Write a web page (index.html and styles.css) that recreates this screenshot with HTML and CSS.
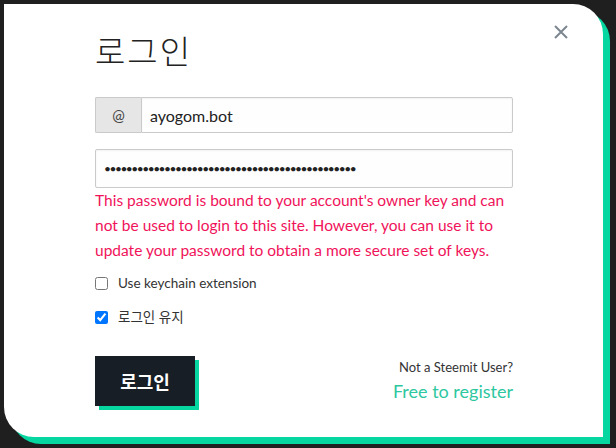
FILE: index.html
```html
<!DOCTYPE html>
<html lang="ko">
<head>
  <meta charset="UTF-8" />
  <title>로그인</title>
  <link rel="stylesheet" href="styles.css">
</head>
<body>
  <div class="modal">
    <button class="close" aria-label="Close">
      <svg width="14" height="14" viewBox="0 0 14 14"><path d="M1 1L13 13M13 1L1 13" stroke="#7d8690" stroke-width="2"/></svg>
    </button>
    <h1 class="title">로그인</h1>

    <form class="login-form">
      <div class="input-group">
        <span class="prefix">@</span>
        <input class="field" type="text" value="ayogom.bot">
      </div>

      <input class="field password" type="password" value="P5Kabcdefghijklmnopqrstuvwxyz12345678901234567">
      <p class="error">This password is bound to your account's owner key and can not be used to login to this site. However, you can use it to update your password to obtain a more secure set of keys.</p>

      <label class="check"><input type="checkbox"> Use keychain extension</label>
      <label class="check"><input type="checkbox" checked> 로그인 유지</label>

      <div class="actions">
        <button type="button" class="btn">로그인</button>
        <div class="signup">
          <div class="signup-note">Not a Steemit User?</div>
          <a class="signup-link" href="#">Free to register</a>
        </div>
      </div>
    </form>
  </div>
</body>
</html>
```

FILE: styles.css
```css
body {
  margin: 0;
  background: #1f1f1f;
  font-family: 'Source Sans Pro', 'Lato', 'Noto Sans CJK KR', sans-serif;
  color: #333;
  height: 448px;
  overflow: hidden;
}

.modal {
  position: relative;
  margin: 4px 0 0 4px;
  width: 599px;
  height: 433px;
  box-sizing: border-box;
  padding: 0 90px 0 91px;
  background: #fff;
  border-radius: 0 30px 0 30px;
  box-shadow: 7px 7px 0 #06d6a0;
}

.close {
  position: absolute;
  top: 21px;
  right: 35px;
  padding: 0;
  border: 0;
  background: none;
  line-height: 0;
}

.title {
  margin: 0;
  padding-top: 27px;
  height: 66px;
  font-family: 'Noto Sans CJK KR', sans-serif;
  font-size: 33px;
  font-weight: 300;
  letter-spacing: 2px;
  line-height: 1.2;
  color: #222;
}

.login-form {
  display: flex;
  flex-direction: column;
}

.input-group {
  display: flex;
  height: 36px;
  margin-bottom: 16px;
}

.prefix {
  width: 45px;
  display: flex;
  align-items: center;
  justify-content: center;
  background: #e6e6e6;
  border: 1px solid #cacaca;
  border-right: 0;
  border-radius: 2px 0 0 2px;
  font-size: 15px;
  color: #444;
}

.field {
  box-sizing: border-box;
  height: 36px;
  flex: 1;
  border: 1px solid #cacaca;
  border-radius: 0 2px 2px 0;
  padding: 0 8px;
  font-family: inherit;
  font-size: 16px;
  color: #222;
  background: #fefefe;
  box-shadow: inset 0 1px 2px rgba(0, 0, 0, 0.05);
  outline: none;
}

.password {
  flex: none;
  height: 39px;
  border-radius: 2px;
  font-size: 12px;
  letter-spacing: -1.5px;
}

.error {
  margin: 0 0 12px;
  font-size: 15.5px;
  line-height: 25px;
  color: #f0135a;
}

.check {
  display: flex;
  align-items: center;
  gap: 10px;
  font-size: 13.5px;
  line-height: 17px;
  color: #333;
  margin-bottom: 17px;
}

.check input {
  margin: 0;
  width: 13px;
  height: 13px;
}

.actions {
  display: flex;
  justify-content: space-between;
  align-items: flex-start;
  margin-top: 13px;
}

.btn {
  width: 100px;
  height: 50px;
  border: 0;
  background: #171e25;
  color: #fff;
  font-family: 'Noto Sans CJK KR', sans-serif;
  font-size: 18px;
  font-weight: 700;
  box-shadow: 4px 4px 0 #06d6a0;
}

.signup {
  text-align: right;
  padding-top: 2px;
}

.signup-note {
  font-size: 13px;
  line-height: 18px;
  color: #333;
}

.signup-link {
  display: block;
  margin-top: 3px;
  font-size: 18px;
  line-height: 24px;
  color: #2dc7a0;
  text-decoration: none;
}
```
